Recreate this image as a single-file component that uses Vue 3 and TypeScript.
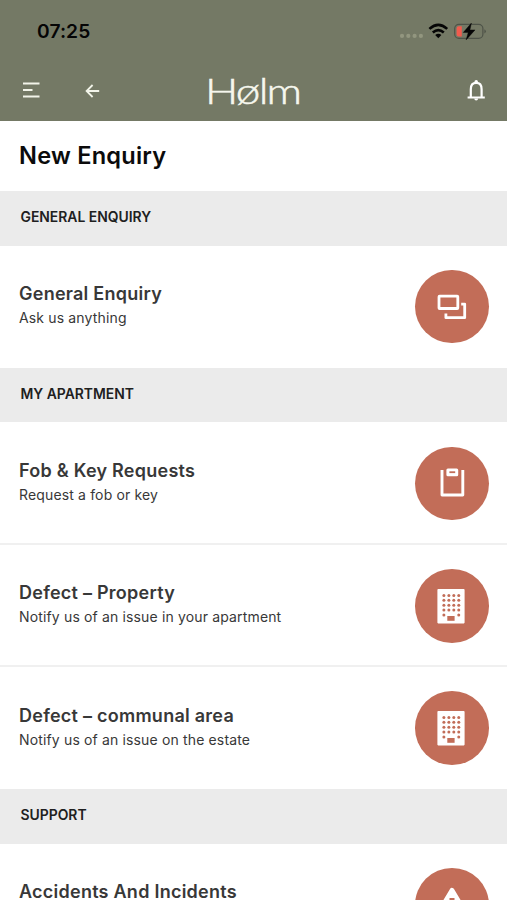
<script setup lang="ts">
type IconName = 'chat' | 'clipboard' | 'building' | 'warning'

interface Enquiry {
  title: string
  detail?: string
  icon: IconName
}

interface Section {
  heading: string
  items: Enquiry[]
}

const sections: Section[] = [
  {
    heading: 'GENERAL ENQUIRY',
    items: [{ title: 'General Enquiry', detail: 'Ask us anything', icon: 'chat' }],
  },
  {
    heading: 'MY APARTMENT',
    items: [
      { title: 'Fob & Key Requests', detail: 'Request a fob or key', icon: 'clipboard' },
      { title: 'Defect – Property', detail: 'Notify us of an issue in your apartment', icon: 'building' },
      { title: 'Defect – communal area', detail: 'Notify us of an issue on the estate', icon: 'building' },
    ],
  },
  {
    heading: 'SUPPORT',
    items: [{ title: 'Accidents And Incidents', icon: 'warning' }],
  },
]

const windows: { x: number; y: number }[] = []
for (let row = 0; row < 5; row++) {
  for (let col = 0; col < 4; col++) {
    if (row === 4 && (col === 1 || col === 2)) continue
    windows.push({ x: 15.9 + 4.95 * col, y: 13.4 + 4.9 * row })
  }
}
</script>

<template>
  <div class="screen">
    <header class="header">
      <div class="status">
        <span class="clock">07:25</span>
        <svg class="indicators" width="90" height="20" viewBox="0 0 90 20">
          <g fill="#92967f">
            <circle cx="5" cy="14.9" r="2.1" /><circle cx="11.3" cy="14.9" r="2.1" />
            <circle cx="17.6" cy="14.9" r="2.1" /><circle cx="23.9" cy="14.9" r="2.1" />
          </g>
          <g fill="none" stroke="#050505" stroke-width="2.6">
            <path d="M32.4 7.9Q41.3-.1 50.2 7.9" />
            <path d="M35.8 11.4Q41.3 6.7 46.8 11.4" />
          </g>
          <path d="M41.3 17.2L38.2 14.1Q41.3 11.5 44.4 14.1Z" fill="#050505" />
          <rect x="57.7" y="3.4" width="28.2" height="14" rx="4.2" fill="none" stroke="#4e5348" stroke-width="1.2" />
          <path d="M61.7 5.3h3.1v10.2h-3.1a2.1 2.1 0 0 1-2.1-2.1v-6a2.1 2.1 0 0 1 2.1-2.1z" fill="#f15b4d" />
          <path d="M87.4 8.2Q90.4 10.4 87.4 12.6Z" fill="#4e5348" />
          <path d="M74.4 2.1L66.2 11.5h5l-2.1 7.4 8.9-10h-5.1z" fill="#050505" stroke="#050505" stroke-width=".4" />
        </svg>
      </div>
      <nav class="nav">
        <svg class="menu" width="18" height="18" viewBox="0 0 18 18" stroke="#f2f4e9" stroke-width="2">
          <path d="M1 1.6h16.5M1 8h9.5M1 14.6h16.5" />
        </svg>
        <svg class="back" width="16" height="16" viewBox="0 0 16 16" fill="none" stroke="#f2f4e9" stroke-width="1.8">
          <path d="M14.2 8H1.8M7.6 2l-6 6 6 6" />
        </svg>
        <span class="logo">Hølm</span>
        <svg class="bell" width="20" height="24" viewBox="0 0 20 24">
          <path d="M4.8 17.9V10.2C4.8 6.2 6.9 3.9 10.2 3.9s5.4 2.3 5.4 6.3v7.7M1.6 18.5h17.2" fill="none" stroke="#fff" stroke-width="2.2" />
          <path d="M8.4 3.8V2.9a1.8 1.8 0 0 1 3.6 0V3.8zM8.3 19.5h3.8a1.9 1.9 0 0 1-3.8 0z" fill="#fff" />
        </svg>
      </nav>
    </header>
    <main>
      <h1 class="title">New Enquiry</h1>
      <section v-for="section in sections" :key="section.heading">
        <h2 class="heading">{{ section.heading }}</h2>
        <ul class="list">
          <li v-for="item in section.items" :key="item.title" class="row">
            <div class="copy">
              <h3 class="name">{{ item.title }}</h3>
              <p v-if="item.detail" class="detail">{{ item.detail }}</p>
            </div>
            <div class="badge">
              <svg v-if="item.icon === 'chat'" width="48" height="48" viewBox="0 0 48 48" fill="none" stroke="#fff" stroke-width="2.8">
                <rect x="11" y="13.2" width="18.8" height="12.3" rx=".6" />
                <path d="M33.2 21.1h3.5v13.6H17.9v-4.2" stroke-linejoin="round" />
              </svg>
              <svg v-else-if="item.icon === 'clipboard'" width="48" height="48" viewBox="0 0 48 48">
                <path d="M14 11v25h20.8V11" fill="none" stroke="#fff" stroke-width="2.9" stroke-linejoin="round" />
                <rect x="18.4" y="9.4" width="11.8" height="7.9" rx="1.5" fill="#fff" />
                <rect x="21.4" y="12.3" width="5.8" height="1.8" fill="#c26d58" />
              </svg>
              <svg v-else-if="item.icon === 'building'" width="48" height="48" viewBox="0 0 48 48">
                <rect x="9.4" y="7.1" width="27.2" height="34.3" rx=".8" fill="#fff" />
                <g fill="#c26d58">
                  <circle v-for="(w, i) in windows" :key="i" :cx="w.x" :cy="w.y" r="1.5" />
                  <rect x="19.3" y="34" width="7.3" height="4.8" />
                </g>
              </svg>
              <svg v-else width="48" height="48" viewBox="0 0 48 48">
                <path d="M24 9.5L41 38H7Z" fill="#fff" stroke="#fff" stroke-width="5" stroke-linejoin="round" />
                <path d="M24 17v11M24 31v3.5" stroke="#c26d58" stroke-width="5" />
              </svg>
            </div>
          </li>
        </ul>
      </section>
    </main>
  </div>
</template>

<style>
body {
  margin: 0;
  background: #fff;
}
</style>

<style scoped>
.screen {
  height: 900px;
  overflow: hidden;
  font-family: Inter, 'Liberation Sans', sans-serif;
  color: #383838;
  background: #fff;
}
.header {
  box-sizing: border-box;
  height: 120.5px;
  background: #747965;
}
.status {
  height: 61px;
  display: flex;
  align-items: center;
  justify-content: space-between;
  padding: 0 20px 0 37px;
}
.clock {
  font-size: 19.2px;
  font-weight: 600;
  letter-spacing: 0.1px;
  line-height: 24px;
  padding-top: 1px;
  color: #050505;
}
.nav {
  display: flex;
  align-items: center;
  height: 59px;
  padding: 0 21px 0 22px;
}
.back {
  margin-left: 45px;
}
.logo {
  width: 80px;
  margin-left: 104px;
  font-family: Lato, sans-serif;
  font-size: 35px;
  font-weight: 300;
  letter-spacing: -1.4px;
  line-height: 40px;
  color: #f6f7ee;
  white-space: nowrap;
  -webkit-text-stroke: 0.5px #f6f7ee;
  padding-bottom: 1px;
  transform: scaleX(1.26);
  transform-origin: left center;
}
.bell {
  margin-left: auto;
}
.title {
  margin: 0;
  height: 70.5px;
  padding: 0 19px;
  font-size: 23.6px;
  font-weight: 600;
  letter-spacing: 0.22px;
  line-height: 69px;
  color: #0b0b0b;
}
.heading {
  margin: 0;
  height: 54.5px;
  padding: 0 20.5px;
  background: #ebebeb;
  font-size: 13.9px;
  font-weight: 600;
  line-height: 53px;
  color: #202020;
}
.list {
  margin: 0;
  padding: 0;
  list-style: none;
}
.row {
  box-sizing: border-box;
  height: 122.3px;
  display: flex;
  align-items: flex-start;
  justify-content: space-between;
  padding: 24.4px 18px 0 19px;
}
.row:not(:last-child) {
  border-bottom: 2px solid #f0f0f0;
}
.copy {
  padding-top: 11.4px;
}
.name {
  margin: 0;
  font-size: 18px;
  font-weight: 600;
  letter-spacing: 0.25px;
  line-height: 26px;
}
.detail {
  margin: 0;
  font-size: 14px;
  letter-spacing: 0.15px;
  line-height: 22px;
}
.badge {
  width: 73.6px;
  height: 73.6px;
  border-radius: 50%;
  background: #c26d58;
  display: flex;
  align-items: center;
  justify-content: center;
}
</style>
